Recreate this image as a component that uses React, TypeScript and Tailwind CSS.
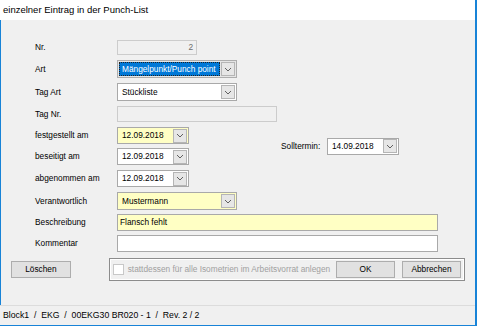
import React from "react";

const Chevron: React.FC = () => (
  <svg width="8" height="5" viewBox="0 0 8 5" className="block">
    <path d="M1 1 L4 4 L7 1" fill="none" stroke="#606060" strokeWidth="1" />
  </svg>
);

const DropButton: React.FC = () => (
  <div className="w-[14px] h-[14px] flex items-center justify-center bg-[#e6e6e6] border border-[#b5b5b5] shrink-0">
    <Chevron />
  </div>
);

const Label: React.FC<{ children: React.ReactNode }> = ({ children }) => (
  <div className="w-[82px] shrink-0 leading-none">{children}</div>
);

const DateBox: React.FC<{ value: string; yellow?: boolean }> = ({ value, yellow }) => (
  <div
    className={`w-[72px] h-[17px] flex items-center justify-between border border-[#a9a9a9] pl-[4px] pr-[1px] ${
      yellow ? "bg-[#ffffc4]" : "bg-white"
    }`}
  >
    <span className="leading-none">{value}</span>
    <DropButton />
  </div>
);

export default function App() {
  return (
    <div className="w-[477px] h-[326px] flex flex-col bg-[#f0f0f0] border-r-2 border-b border-[#1883d7] font-['Liberation_Sans',Arial,sans-serif] text-[8.3px] text-black overflow-hidden">
      {/* Title bar */}
      <div className="h-[20px] shrink-0 bg-white flex items-center pl-[3px] text-[9.5px]">
        einzelner Eintrag in der Punch-List
      </div>

      {/* Body */}
      <div className="flex-1 border-l border-[#1883d7] px-[10px] pt-[20px] flex flex-col">
        <div className="pl-[24px] flex flex-col">
          <div className="flex items-center h-[15px]">
            <Label>Nr.</Label>
            <div className="w-[80px] h-[15px] border border-[#cccccc] bg-[#f0f0f0] flex items-center justify-end pr-[3px] text-[#6d6d6d]">
              2
            </div>
          </div>

          <div className="flex items-center h-[18px] mt-[5px]">
            <Label>Art</Label>
            <div className="w-[120px] h-[18px] border border-[#adadad] bg-[#e5e5e5] flex items-center pl-[1px] pr-[1px] gap-[1px]">
              <div className="flex-1 h-[14px] bg-[#0078d7] border border-dotted border-[#222] text-white flex items-center pl-[2px] leading-none whitespace-nowrap overflow-hidden">
                Mängelpunkt/Punch point
              </div>
              <DropButton />
            </div>
          </div>

          <div className="flex items-center h-[18px] mt-[5px]">
            <Label>Tag Art</Label>
            <div className="w-[120px] h-[18px] border border-[#a9a9a9] bg-white flex items-center justify-between pl-[4px] pr-[1px]">
              <span className="leading-none">Stückliste</span>
              <DropButton />
            </div>
          </div>

          <div className="flex items-center h-[16px] mt-[5px]">
            <Label>Tag Nr.</Label>
            <div className="w-[160px] h-[16px] border border-[#cccccc] bg-[#f0f0f0]" />
          </div>

          <div className="flex items-center mt-[5px]">
            <div className="flex flex-col gap-[4px]">
              <div className="flex items-center h-[17px]">
                <Label>festgestellt am</Label>
                <DateBox value="12.09.2018" yellow />
              </div>
              <div className="flex items-center h-[17px]">
                <Label>beseitigt am</Label>
                <DateBox value="12.09.2018" />
              </div>
            </div>
            <div className="flex items-center ml-[92px]">
              <span className="w-[46px] leading-none">Solltermin:</span>
              <DateBox value="14.09.2018" />
            </div>
          </div>

          <div className="flex items-center h-[17px] mt-[5px]">
            <Label>abgenommen am</Label>
            <DateBox value="12.09.2018" />
          </div>

          <div className="flex items-center h-[18px] mt-[5px]">
            <Label>Verantwortlich</Label>
            <div className="w-[120px] h-[18px] border border-[#a9a9a9] bg-[#ffffc4] flex items-center justify-between pl-[4px] pr-[1px]">
              <span className="leading-none">Mustermann</span>
              <DropButton />
            </div>
          </div>

          <div className="flex items-center h-[17px] mt-[4px]">
            <Label>Beschreibung</Label>
            <div className="w-[321px] h-[17px] border border-[#a9a9a9] bg-[#ffffc4] flex items-center pl-[2px] leading-none">
              Flansch fehlt
            </div>
          </div>

          <div className="flex items-center h-[17px] mt-[4px]">
            <Label>Kommentar</Label>
            <div className="w-[321px] h-[17px] border border-[#a9a9a9] bg-white" />
          </div>
        </div>

        {/* Buttons row */}
        <div className="flex items-center mt-[6px]">
          <button className="w-[60px] h-[17px] bg-[#e1e1e1] border border-[#adadad] leading-none">
            Löschen
          </button>
          <div className="ml-[38px] w-[358px] h-[23px] border border-[#8c8c8c] shadow-[inset_0_0_0_1px_#ffffff] flex items-center pl-[3px] pr-[3px]">
            <div className="w-[11px] h-[11px] border border-[#c8c8c8] bg-white shrink-0" />
            <span className="ml-[4px] text-[#a0a0a0] text-[8.3px] leading-none whitespace-nowrap">
              stattdessen für alle Isometrien im Arbeitsvorrat anlegen
            </span>
            <div className="flex-1" />
            <button className="w-[59px] h-[17px] bg-[#e1e1e1] border border-[#adadad] leading-none">
              OK
            </button>
            <button className="ml-[7px] w-[59px] h-[17px] bg-[#e1e1e1] border border-[#adadad] leading-none">
              Abbrechen
            </button>
          </div>
        </div>
      </div>

      {/* Status bar */}
      <div className="h-[20px] shrink-0 border-t border-[#dcdcdc] flex items-center pl-[3px] text-[8.7px]">
        Block1&nbsp;&nbsp;/&nbsp;&nbsp;EKG&nbsp;&nbsp;/&nbsp;&nbsp;00EKG30 BR020 - 1&nbsp;&nbsp;/&nbsp;&nbsp;Rev. 2 / 2
      </div>
    </div>
  );
}
